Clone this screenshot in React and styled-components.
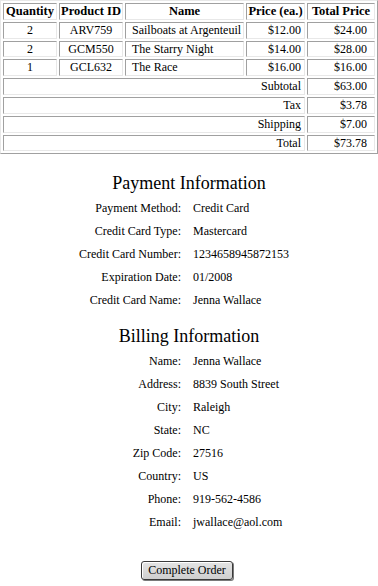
import styled, { createGlobalStyle } from "styled-components";

const GlobalStyle = createGlobalStyle`
  html, body {
    margin: 0;
    padding: 0;
    background: #ffffff;
    color: #000000;
    font-family: "Liberation Serif", "Times New Roman", serif;
    font-size: 12px;
  }
`;

const items = [
  { qty: 2, id: "ARV759", name: "Sailboats at Argenteuil", price: "$12.00", total: "$24.00" },
  { qty: 2, id: "GCM550", name: "The Starry Night", price: "$14.00", total: "$28.00" },
  { qty: 1, id: "GCL632", name: "The Race", price: "$16.00", total: "$16.00" },
];

const sums = [
  ["Subtotal", "$63.00"],
  ["Tax", "$3.78"],
  ["Shipping", "$7.00"],
  ["Total", "$73.78"],
];

const payment = [
  ["Payment Method:", "Credit Card"],
  ["Credit Card Type:", "Mastercard"],
  ["Credit Card Number:", "1234658945872153"],
  ["Expiration Date:", "01/2008"],
  ["Credit Card Name:", "Jenna Wallace"],
];

const billing = [
  ["Name:", "Jenna Wallace"],
  ["Address:", "8839 South Street"],
  ["City:", "Raleigh"],
  ["State:", "NC"],
  ["Zip Code:", "27516"],
  ["Country:", "US"],
  ["Phone:", "919-562-4586"],
  ["Email:", "jwallace@aol.com"],
];

const columns = [54, 64, 119, 59, 68];

const Page = styled.div`
  width: 378px;
  padding-bottom: 6px;
`;

const OrderTable = styled.table`
  box-sizing: border-box;
  width: 378px;
  border-collapse: separate;
  border-spacing: 2px;
  border: 1px solid;
  border-color: #e8e8e8 #a0a0a0 #a0a0a0 #e8e8e8;
  table-layout: fixed;
`;

const Head = styled.th`
  font-size: 12.5px;
  font-weight: bold;
  line-height: 14.8px;
  padding: 0;
  text-align: center;
  border: 1px solid;
  border-color: #a0a0a0 #e8e8e8 #e8e8e8 #a0a0a0;
  white-space: nowrap;
  overflow: hidden;
`;

const Cell = styled.td`
  line-height: 14.8px;
  padding: 0 ${(p) => p.$pr || 1}px 0 ${(p) => p.$pl || 1}px;
  text-align: ${(p) => p.$align || "left"};
  border: 1px solid;
  border-color: #a0a0a0 #e8e8e8 #e8e8e8 #a0a0a0;
  white-space: nowrap;
  overflow: hidden;
`;

const Heading = styled.h2`
  margin: ${(p) => p.$top}px 0 0;
  font-size: 18px;
  font-weight: normal;
  line-height: 21px;
  text-align: center;
`;

const Details = styled.div`
  display: grid;
  grid-template-columns: 1fr 1fr;
  column-gap: 12px;
  padding-right: 4px;
  margin-top: 3px;
  grid-auto-rows: 23px;
  align-items: center;
`;

const Label = styled.div`
  text-align: right;
  white-space: nowrap;
`;

const Value = styled.div`
  white-space: nowrap;
`;

const Actions = styled.div`
  display: flex;
  justify-content: center;
  margin-top: 27px;
`;

const Button = styled.button`
  font-family: "Liberation Serif", "Times New Roman", serif;
  font-size: 12px;
  color: #000;
  height: 19px;
  padding: 0 6px;
  background: linear-gradient(#e4e4e4, #cfcfcf);
  border: 1px solid #3a3a3a;
  border-radius: 3px;
  box-shadow: 1px 1px 0 #7a7a7a, inset 1px 1px 0 #ffffff;
  margin-left: -4px;
`;

function DetailList({ rows }) {
  return (
    <Details>
      {rows.map(([label, value]) => [
        <Label key={label}>{label}</Label>,
        <Value key={label + "-v"}>{value}</Value>,
      ])}
    </Details>
  );
}

export default function App() {
  return (
    <Page>
      <GlobalStyle />
      <OrderTable>
        <colgroup>
          {columns.map((w, i) => (
            <col key={i} style={{ width: w }} />
          ))}
        </colgroup>
        <thead>
          <tr>
            <Head>Quantity</Head>
            <Head>Product ID</Head>
            <Head>Name</Head>
            <Head>Price (ea.)</Head>
            <Head>Total Price</Head>
          </tr>
        </thead>
        <tbody>
          {items.map((it) => (
            <tr key={it.id}>
              <Cell $align="center">{it.qty}</Cell>
              <Cell $align="center">{it.id}</Cell>
              <Cell $pl={6}>{it.name}</Cell>
              <Cell $align="right" $pr={3}>{it.price}</Cell>
              <Cell $align="right" $pr={7}>{it.total}</Cell>
            </tr>
          ))}
          {sums.map(([label, value]) => (
            <tr key={label}>
              <Cell colSpan={4} $align="right" $pr={3}>{label}</Cell>
              <Cell $align="right" $pr={7}>{value}</Cell>
            </tr>
          ))}
        </tbody>
      </OrderTable>

      <Heading $top={19}>Payment Information</Heading>
      <DetailList rows={payment} />

      <Heading $top={14}>Billing Information</Heading>
      <DetailList rows={billing} />

      <Actions>
        <Button type="button">Complete Order</Button>
      </Actions>
    </Page>
  );
}
